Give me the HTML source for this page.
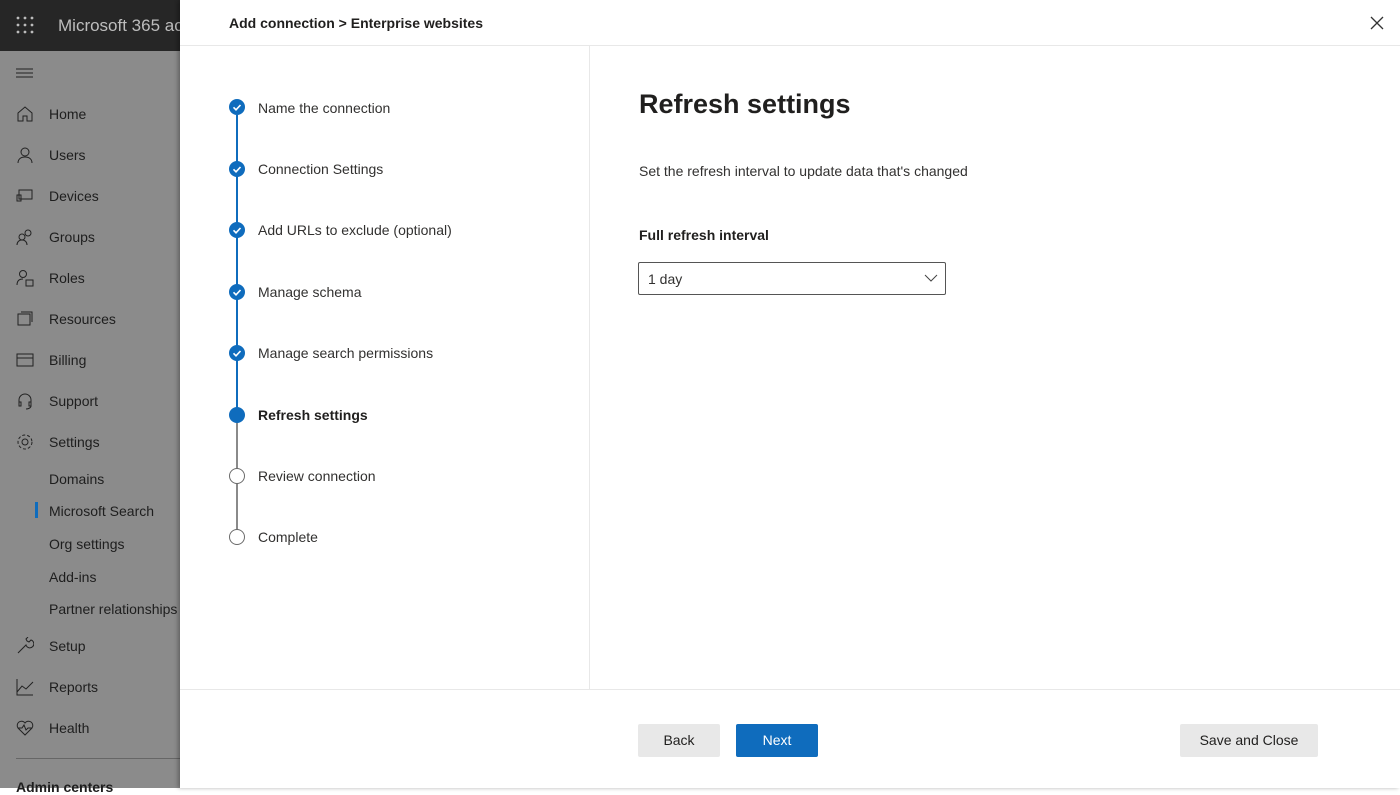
<!DOCTYPE html>
<html><head><style>
*{margin:0;padding:0;box-sizing:border-box}
body{width:1400px;height:788px;overflow:hidden;font-family:"Liberation Sans",sans-serif;background:#fff;position:relative}
.top{position:absolute;left:0;top:0;width:180px;height:51px;background:#262626;color:#bdbdbd;font-size:17px}
.side{position:absolute;left:0;top:51px;width:180px;height:737px;background:#8b8b8b;color:#1e1e1e;font-size:14px}
.si{position:absolute;left:49px}
.ic{position:absolute;left:16px;width:18px;height:18px}
.panel{position:absolute;left:180px;top:0;width:1220px;height:788px;background:#fff;box-shadow:-2px 0 4px rgba(0,0,0,.3)}
.t{position:absolute;font-size:14px;color:#323130}
.step{position:absolute;left:258px;font-size:14px;color:#323130}
.c{position:absolute;left:229px;width:16px;height:16px;border-radius:50%}
.done{background:#0f6cbd}
.open{border:1.5px solid #6b6b6b;background:#fff}
.ln{position:absolute;left:236px;width:2px}
.btn{position:absolute;top:724px;height:33px;font-size:14px;text-align:center;line-height:33px;border-radius:2px}
</style></head><body>
<div class="top">
<svg style="position:absolute;left:16px;top:16px" width="18" height="18"><g fill="#bbb"><circle cx="2" cy="2" r="1.4"/><circle cx="9" cy="2" r="1.4"/><circle cx="16" cy="2" r="1.4"/><circle cx="2" cy="9" r="1.4"/><circle cx="9" cy="9" r="1.4"/><circle cx="16" cy="9" r="1.4"/><circle cx="2" cy="16" r="1.4"/><circle cx="9" cy="16" r="1.4"/><circle cx="16" cy="16" r="1.4"/></g></svg>
<div style="position:absolute;left:58px;top:16px;white-space:nowrap">Microsoft 365 ac</div></div>
<div class="side">
<svg style="position:absolute;left:16px;top:17px" width="18" height="10"><path d="M0 1h17M0 5h17M0 9h17" stroke="#222" stroke-width="1"/></svg>
<svg class="ic" style="top:54px" viewBox="0 0 18 18"><path d="M2 8L9 2l7 6v8H11v-5H7v5H2z" fill="none" stroke="#222"/></svg><div class="si" style="top:55px">Home</div>
<svg class="ic" style="top:95px" viewBox="0 0 18 18"><circle cx="9" cy="6" r="4" fill="none" stroke="#222"/><path d="M2 17c0-4 3-6 7-6s7 2 7 6" fill="none" stroke="#222"/></svg><div class="si" style="top:96px">Users</div>
<svg class="ic" style="top:136px" viewBox="0 0 18 18"><rect x="3" y="3" width="13" height="9" fill="none" stroke="#222"/><rect x="1" y="8" width="4" height="6" fill="none" stroke="#222"/></svg><div class="si" style="top:137px">Devices</div>
<svg class="ic" style="top:177px" viewBox="0 0 18 18"><circle cx="12" cy="5" r="3" fill="none" stroke="#222"/><circle cx="6" cy="9" r="3" fill="none" stroke="#222"/><path d="M1 17c0-3 2-5 5-5s5 2 5 5" fill="none" stroke="#222"/></svg><div class="si" style="top:178px">Groups</div>
<svg class="ic" style="top:218px" viewBox="0 0 18 18"><circle cx="7" cy="5" r="3.5" fill="none" stroke="#222"/><path d="M1 16c0-4 2-6 6-6" fill="none" stroke="#222"/><rect x="10" y="11" width="7" height="6" fill="none" stroke="#222"/></svg><div class="si" style="top:219px">Roles</div>
<svg class="ic" style="top:259px" viewBox="0 0 18 18"><rect x="2" y="4" width="12" height="11" fill="none" stroke="#222"/><path d="M5 2h11v10" fill="none" stroke="#222"/></svg><div class="si" style="top:260px">Resources</div>
<svg class="ic" style="top:300px" viewBox="0 0 18 18"><rect x="1" y="3" width="16" height="12" fill="none" stroke="#222"/><path d="M1 7h16" stroke="#222"/></svg><div class="si" style="top:301px">Billing</div>
<svg class="ic" style="top:341px" viewBox="0 0 18 18"><path d="M3 10V8a6 6 0 0112 0v2M3 10h2v4H3zM13 10h2v4h-2zM15 14c0 2-3 3-5 3" fill="none" stroke="#222"/></svg><div class="si" style="top:342px">Support</div>
<svg class="ic" style="top:382px" viewBox="0 0 18 18"><circle cx="9" cy="9" r="3" fill="none" stroke="#222"/><circle cx="9" cy="9" r="7" fill="none" stroke="#222" stroke-dasharray="3 2"/></svg><div class="si" style="top:383px">Settings</div>
<div class="si" style="top:420px">Domains</div>
<div style="position:absolute;left:35px;top:451px;width:3px;height:16px;background:#0f6cbd"></div>
<div class="si" style="top:452px">Microsoft Search</div>
<div class="si" style="top:485px">Org settings</div>
<div class="si" style="top:518px">Add-ins</div>
<div class="si" style="top:550px;white-space:nowrap">Partner relationships</div>
<svg class="ic" style="top:586px" viewBox="0 0 18 18"><path d="M2 16l8-8a4 4 0 105-5l-2 2-2-1-1-2 2-2" fill="none" stroke="#222"/></svg><div class="si" style="top:587px">Setup</div>
<svg class="ic" style="top:627px" viewBox="0 0 18 18"><path d="M1 1v16h16M1 14l5-6 4 3 7-7" fill="none" stroke="#222"/></svg><div class="si" style="top:628px">Reports</div>
<svg class="ic" style="top:668px" viewBox="0 0 18 18"><path d="M9 16L2 9a4 4 0 017-5 4 4 0 017 5zM2 9h4l2-3 2 5 2-2h4" fill="none" stroke="#222"/></svg><div class="si" style="top:669px">Health</div>
<div style="position:absolute;left:16px;top:707px;width:164px;height:1px;background:#666"></div>
<div class="si" style="left:16px;top:728px;font-weight:bold">Admin centers</div>
</div>
<div class="panel"></div>
<div class="t" style="left:229px;top:15px;font-weight:bold;color:#201f1e">Add connection &gt; Enterprise websites</div>
<svg style="position:absolute;left:1370px;top:16px" width="14" height="14"><path d="M1 1l12 12M13 1L1 13" stroke="#333" stroke-width="1.3"/></svg>
<div style="position:absolute;left:180px;top:45px;width:1220px;height:1px;background:#e8e8e8"></div>
<div style="position:absolute;left:589px;top:46px;width:1px;height:643px;background:#e8e8e8"></div>
<div style="position:absolute;left:180px;top:689px;width:1220px;height:1px;background:#e8e8e8"></div>

<div class="ln" style="top:115px;height:300px;background:#0f6cbd"></div>
<div class="ln" style="top:415px;height:122px;background:#8a8a8a;width:1.5px"></div>
<svg width="0" height="0" style="position:absolute"></svg>
<div class="c done" style="top:99px"></div><div class="c done" style="top:161px"></div><div class="c done" style="top:222px"></div><div class="c done" style="top:284px"></div><div class="c done" style="top:345px"></div><div class="c done" style="top:407px"></div>
<div class="c open" style="top:468px"></div><div class="c open" style="top:529px"></div>
<svg style="position:absolute;left:229px;top:99px" width="16" height="270"><g fill="none" stroke="#fff" stroke-width="1.6"><path d="M4.5 8.3l2.5 2.5 4.5-4.8"/><path d="M4.5 70.3l2.5 2.5 4.5-4.8"/><path d="M4.5 131.3l2.5 2.5 4.5-4.8"/><path d="M4.5 193.3l2.5 2.5 4.5-4.8"/><path d="M4.5 254.3l2.5 2.5 4.5-4.8"/></g></svg>
<div class="step" style="top:100px">Name the connection</div>
<div class="step" style="top:161px">Connection Settings</div>
<div class="step" style="top:222px">Add URLs to exclude (optional)</div>
<div class="step" style="top:284px">Manage schema</div>
<div class="step" style="top:345px">Manage search permissions</div>
<div class="step" style="top:407px;font-weight:bold;color:#201f1e">Refresh settings</div>
<div class="step" style="top:468px">Review connection</div>
<div class="step" style="top:529px">Complete</div>

<div class="t" style="left:639px;top:89px;font-size:27px;font-weight:bold;color:#201f1e">Refresh settings</div>
<div class="t" style="left:639px;top:163px">Set the refresh interval to update data that's changed</div>
<div class="t" style="left:639px;top:227px;font-weight:bold;color:#201f1e">Full refresh interval</div>
<div style="position:absolute;left:638px;top:262px;width:308px;height:33px;border:1px solid #555;border-radius:2px"></div>
<div class="t" style="left:648px;top:271px">1 day</div>
<svg style="position:absolute;left:924px;top:274px" width="14" height="8"><path d="M1 1l6 6 6-6" fill="none" stroke="#444"/></svg>

<div class="btn" style="left:638px;width:82px;background:#e8e8e8;color:#201f1e">Back</div>
<div class="btn" style="left:736px;width:82px;background:#0f6cbd;color:#fff">Next</div>
<div class="btn" style="left:1180px;width:138px;background:#e8e8e8;color:#201f1e">Save and Close</div>
</body></html>
